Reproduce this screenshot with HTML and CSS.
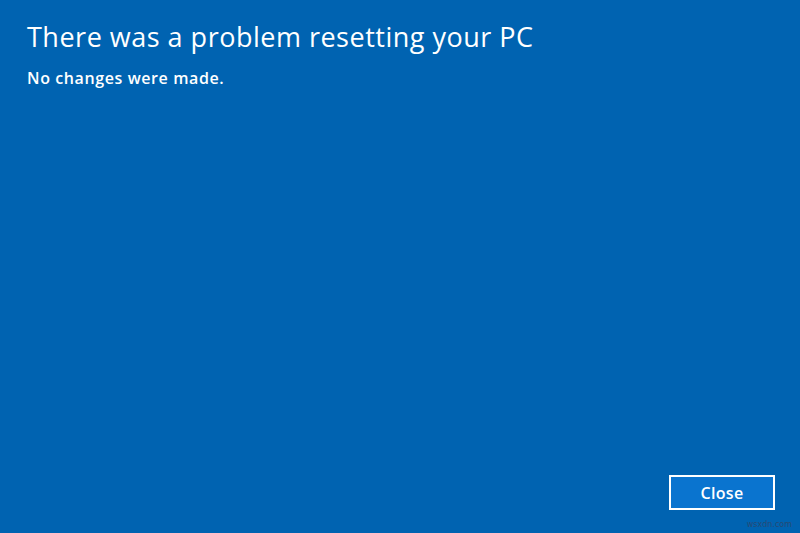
FILE: index.html
```html
<!DOCTYPE html>
<html lang="en">
<head>
<meta charset="utf-8">
<title>Reset error</title>
<link rel="stylesheet" href="styles.css">
</head>
<body>
<main class="screen">
  <h1 class="title">There was a problem resetting your PC</h1>
  <p class="subtitle">No changes were made.</p>
  <div class="actions">
    <button class="btn" type="button">Close</button>
  </div>
  <span class="watermark">wsxdn.com</span>
</main>
</body>
</html>
```
FILE: styles.css
```css
html, body {
  margin: 0;
  padding: 0;
}
body {
  background: #0063b1;
  font-family: "Open Sans", "Noto Sans", "DejaVu Sans", sans-serif;
  color: #ffffff;
}
.screen {
  position: relative;
  box-sizing: border-box;
  width: 800px;
  height: 533px;
  display: flex;
  flex-direction: column;
  padding: 21px 25px 23px 27px;
}
.title {
  margin: 0;
  font-size: 27px;
  font-weight: 400;
  letter-spacing: 0.5px;
  line-height: 32px;
  white-space: nowrap;
}
.subtitle {
  margin: 15px 0 0 0;
  font-size: 16px;
  font-weight: 600;
  letter-spacing: 0.6px;
  line-height: 20px;
  white-space: nowrap;
}
.actions {
  margin-top: auto;
  display: flex;
  justify-content: flex-end;
}
.btn {
  box-sizing: border-box;
  width: 106px;
  height: 35px;
  border: 2px solid #ffffff;
  background: #0a74cf;
  color: #ffffff;
  font-family: inherit;
  font-size: 16px;
  font-weight: 600;
  letter-spacing: 0.3px;
  padding: 0;
}
.watermark {
  position: absolute;
  right: 8px;
  bottom: 4px;
  font-family: "DejaVu Sans", sans-serif;
  font-size: 8px;
  color: #274a73;
}
```
